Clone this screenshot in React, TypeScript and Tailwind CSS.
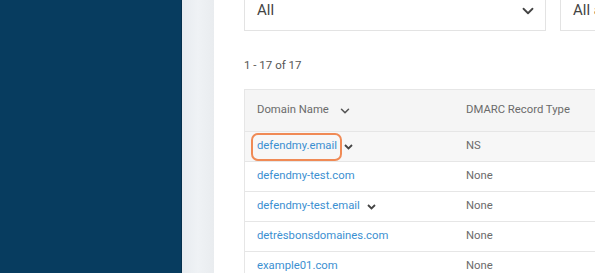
import { ChevronDown } from "lucide-react";

const rows = [
  { domain: "defendmy.email", type: "NS", expand: true, active: true },
  { domain: "defendmy-test.com", type: "None" },
  { domain: "defendmy-test.email", type: "None", expand: true },
  { domain: "detrèsbonsdomaines.com", type: "None" },
  { domain: "example01.com", type: "None" },
];

function Caret() {
  return (
    <svg width="9" height="6" viewBox="0 0 9 6" className="shrink-0">
      <path d="M1 1l3.5 3.5L8 1" fill="none" stroke="#444" strokeWidth="1.8" />
    </svg>
  );
}

export default function App() {
  return (
    <div
      className="w-[595px] h-[273px] overflow-hidden flex bg-white"
      style={{ fontFamily: "Roboto, 'Liberation Sans', sans-serif" }}
    >
      <div className="w-[182px] shrink-0 bg-[#073c5f] border-r border-[#05304d]" />
      <div className="w-[32px] shrink-0 bg-gradient-to-r from-[#e7ebef] via-[#eff2f5] to-[#e9ecef]" />

      <div className="flex-1 min-w-0 pl-[30px] flex flex-col">
        <div className="flex gap-[14px] -mt-[10px] h-[41px] shrink-0">
          <div className="w-[302px] shrink-0 border border-[#e3e3e3] flex items-center justify-between pl-[12px] pr-[8px]">
            <span className="text-[15px] text-[#444]">All</span>
            <ChevronDown size={18} strokeWidth={2.4} className="text-[#444]" />
          </div>
          <div className="w-[120px] shrink-0 border border-[#e3e3e3] flex items-center pl-[12px] overflow-hidden">
            <span className="text-[15px] text-[#444] whitespace-nowrap">All a</span>
          </div>
        </div>

        <div className="mt-[26px] text-[11.5px] text-[#555]">1 - 17 of 17</div>

        <div className="mt-[15px] w-[400px] border-l border-t border-[#e6e6e6]">
          <div className="h-[42px] bg-[#f5f5f5] border-b border-[#e6e6e6] flex items-center text-[11.3px] text-[#6b6b6b]">
            <div className="w-[209px] pl-[12px] flex items-center gap-[9px]">
              <span>Domain Name</span>
              <ChevronDown size={14} strokeWidth={2.6} className="text-[#555]" />
            </div>
            <div className="pl-[12px]">DMARC Record Type</div>
          </div>
          {rows.map((r) => (
            <div
              key={r.domain}
              className={`h-[30px] border-b border-[#e6e6e6] flex items-center text-[11.3px] ${
                r.active ? "bg-[#f7f7f7]" : "bg-white"
              }`}
            >
              <div className="w-[209px] pl-[6px] flex items-center gap-[2px]">
                <span
                  className={`text-[#3b8fd1] pl-[4px] pr-[3px] h-[28px] flex items-center rounded-[7px] border-2 ${
                    r.active ? "border-[#f08a55]" : "border-transparent"
                  }`}
                >
                  {r.domain}
                </span>
                {r.expand && <Caret />}
              </div>
              <div className="pl-[12px] text-[#6b6b6b]">{r.type}</div>
            </div>
          ))}
        </div>
      </div>
    </div>
  );
}
